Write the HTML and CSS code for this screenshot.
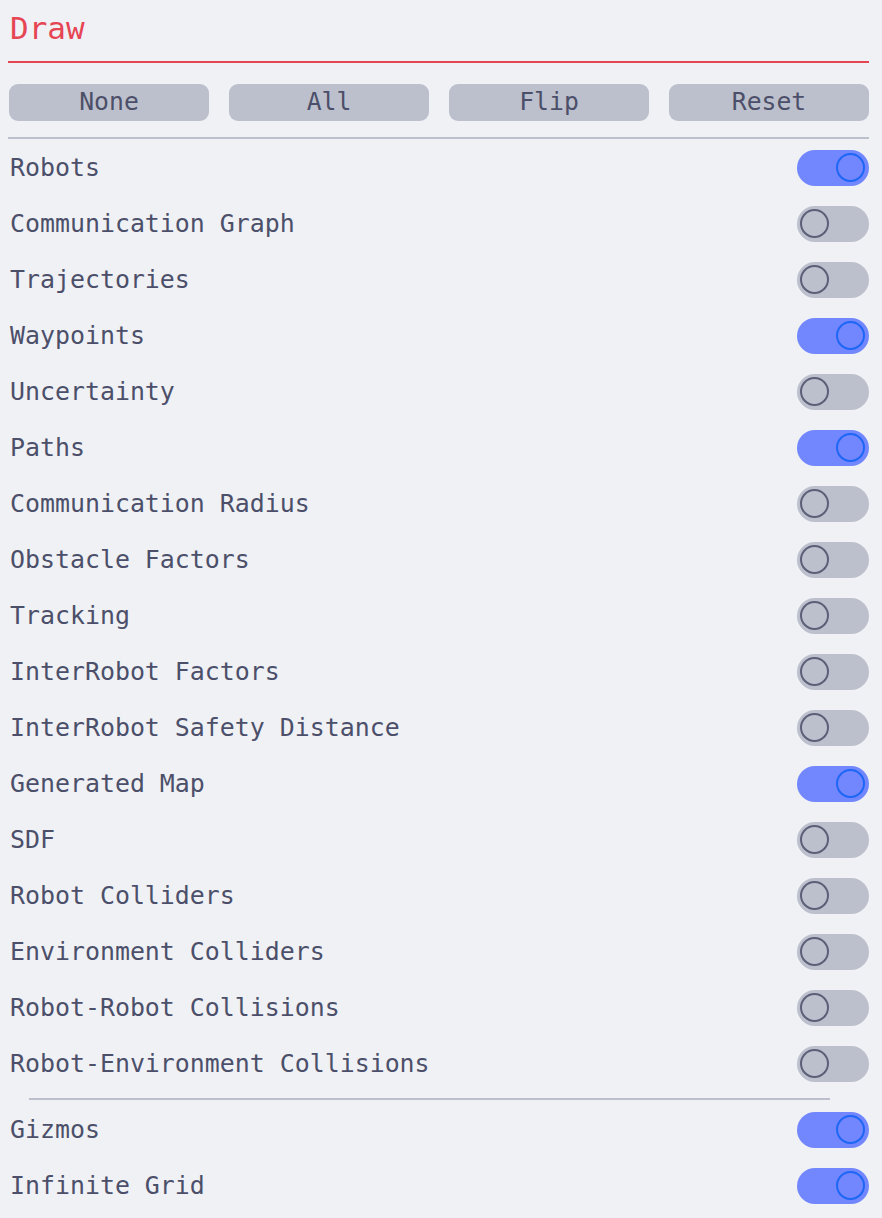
FILE: index.html
```html
<!DOCTYPE html>
<html lang="en">
<head>
<meta charset="utf-8">
<title>Draw</title>
<link rel="stylesheet" href="styles.css">
</head>
<body>
<div class="panel">
  <div class="title">Draw</div>
  <div class="buttons">
    <div class="btn">None</div>
    <div class="btn">All</div>
    <div class="btn">Flip</div>
    <div class="btn">Reset</div>
  </div>
  <div class="list">
    <div class="row"><span class="label">Robots</span><span class="toggle on"><span class="knob"></span></span></div>
    <div class="row"><span class="label">Communication Graph</span><span class="toggle"><span class="knob"></span></span></div>
    <div class="row"><span class="label">Trajectories</span><span class="toggle"><span class="knob"></span></span></div>
    <div class="row"><span class="label">Waypoints</span><span class="toggle on"><span class="knob"></span></span></div>
    <div class="row"><span class="label">Uncertainty</span><span class="toggle"><span class="knob"></span></span></div>
    <div class="row"><span class="label">Paths</span><span class="toggle on"><span class="knob"></span></span></div>
    <div class="row"><span class="label">Communication Radius</span><span class="toggle"><span class="knob"></span></span></div>
    <div class="row"><span class="label">Obstacle Factors</span><span class="toggle"><span class="knob"></span></span></div>
    <div class="row"><span class="label">Tracking</span><span class="toggle"><span class="knob"></span></span></div>
    <div class="row"><span class="label">InterRobot Factors</span><span class="toggle"><span class="knob"></span></span></div>
    <div class="row"><span class="label">InterRobot Safety Distance</span><span class="toggle"><span class="knob"></span></span></div>
    <div class="row"><span class="label">Generated Map</span><span class="toggle on"><span class="knob"></span></span></div>
    <div class="row"><span class="label">SDF</span><span class="toggle"><span class="knob"></span></span></div>
    <div class="row"><span class="label">Robot Colliders</span><span class="toggle"><span class="knob"></span></span></div>
    <div class="row"><span class="label">Environment Colliders</span><span class="toggle"><span class="knob"></span></span></div>
    <div class="row"><span class="label">Robot-Robot Collisions</span><span class="toggle"><span class="knob"></span></span></div>
    <div class="row"><span class="label">Robot-Environment Collisions</span><span class="toggle"><span class="knob"></span></span></div>
  </div>
  <div class="sep"></div>
  <div class="list">
    <div class="row"><span class="label">Gizmos</span><span class="toggle on"><span class="knob"></span></span></div>
    <div class="row"><span class="label">Infinite Grid</span><span class="toggle on"><span class="knob"></span></span></div>
  </div>
</div>
</body>
</html>
```
FILE: styles.css
```css
html, body {
  margin: 0;
  padding: 0;
  background: #eff1f5;
}
body {
  font-family: "DejaVu Sans Mono", "Liberation Mono", monospace;
  color: #4c4f69;
  height: 1218px;
  overflow: hidden;
}
.panel {
  margin-left: 8px;
  width: 861px;
  padding-top: 8px;
}
.title {
  font-size: 31px;
  line-height: 40px;
  color: #e64553;
  padding-left: 2px;
  padding-bottom: 13px;
  border-bottom: 2px solid #e64553;
}
.buttons {
  display: grid;
  grid-template-columns: repeat(4, 1fr);
  gap: 20px;
  margin-top: 21px;
  padding-left: 1px;
  padding-bottom: 16px;
  border-bottom: 2px solid #bcc0cc;
}
.btn {
  background: #bcc0cc;
  border-radius: 9px;
  height: 37px;
  line-height: 35px;
  padding-bottom: 2px;
  box-sizing: border-box;
  text-align: center;
  font-size: 24.75px;
}
.list {
  display: flex;
  flex-direction: column;
}
.row {
  height: 56px;
  display: flex;
  align-items: center;
  justify-content: space-between;
  font-size: 24.9px;
}
.label {
  padding-left: 2px;
}
.toggle {
  width: 72px;
  height: 36px;
  border-radius: 18px;
  background: #bcc0cc;
  display: flex;
  align-items: center;
  padding: 0 4px 0 3px;
  box-sizing: border-box;
  justify-content: flex-start;
  margin-top: 1px;
}
.toggle.on {
  background: #7287fd;
  justify-content: flex-end;
}
.knob {
  width: 29px;
  height: 29px;
  border-radius: 50%;
  box-sizing: border-box;
  border: 2px solid #5c5f77;
}
.toggle.on .knob {
  border-color: #1e66f5;
}
.sep {
  height: 2px;
  background: #bcc0cc;
  margin: 7px 39px 1px 21px;
}
```
